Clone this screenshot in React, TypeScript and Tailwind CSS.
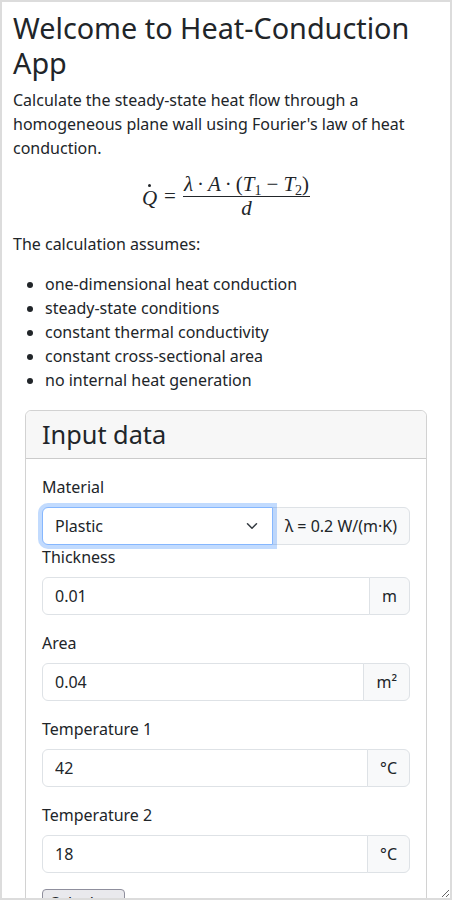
import React from "react";

const assumptions = [
  "one-dimensional heat conduction",
  "steady-state conditions",
  "constant thermal conductivity",
  "constant cross-sectional area",
  "no internal heat generation",
];

function Formula() {
  return (
    <div className="h-[72px] flex justify-center items-center font-['Liberation_Serif',serif] text-[21px] text-[#212529]">
      <span className="relative italic leading-[22px] top-[2px]">
        Q
        <span className="absolute left-[6px] top-[-3px] w-[3px] h-[3px] rounded-full bg-[#212529]" />
      </span>
      <span className="mx-[7px] leading-[22px]">=</span>
      <span className="inline-flex flex-col items-center">
        <span className="px-[1px] leading-[23px] whitespace-nowrap">
          <i>λ</i>
          <span className="mx-[4px]">·</span>
          <i>A</i>
          <span className="mx-[4px]">·</span>(<i>T</i>
          <sub className="text-[14px]">1</sub>
          <span className="mx-[5px]">−</span>
          <i>T</i>
          <sub className="text-[14px]">2</sub>)
        </span>
        <span className="w-full border-t border-[#212529] text-center leading-[21px] pt-[1px]">
          <i>d</i>
        </span>
      </span>
    </div>
  );
}

function UnitField({
  label,
  value,
  unit,
  last,
}: {
  label: string;
  value: string;
  unit: React.ReactNode;
  last?: boolean;
}) {
  return (
    <div className={last ? "" : "mb-4"}>
      <label className="block mb-2 leading-6">{label}</label>
      <div className="flex">
        <input
          className="flex-1 min-w-0 h-[38px] px-3 border border-[#dee2e6] rounded-l-[6px] text-base leading-6 text-[#212529] bg-white outline-none"
          value={value}
          readOnly
        />
        <span className="flex items-center px-3 -ml-px border border-[#dee2e6] rounded-r-[6px] bg-[#f8f9fa] leading-6">
          {unit}
        </span>
      </div>
    </div>
  );
}

export default function App() {
  return (
    <div className="w-[452px] h-[900px] overflow-hidden resize border-2 border-[#dcdcdc] bg-white px-[11px] pt-[9px] font-['Noto_Sans',sans-serif] text-[#212529] text-base leading-6">
      <h1 className="text-[28.8px] leading-[1.2] font-normal mb-2">
        Welcome to Heat-Conduction App
      </h1>
      <p>
        Calculate the steady-state heat flow through a homogeneous plane wall
        using Fourier's law of heat conduction.
      </p>

      <Formula />

      <p className="mb-4">The calculation assumes:</p>
      <ul className="list-disc pl-8 mb-[18px]">
        {assumptions.map((a) => (
          <li key={a}>{a}</li>
        ))}
      </ul>

      {/* Input card */}
      <div className="mx-3 border border-[rgba(0,0,0,0.175)] rounded-[6px]">
        <div className="px-4 py-2 bg-[#f7f7f7] border-b border-[rgba(0,0,0,0.175)] rounded-t-[6px]">
          <h2 className="text-[25.3px] leading-[31px] font-normal">Input data</h2>
        </div>
        <div className="p-4">
          <label className="block mb-2 leading-6">Material</label>
          <div className="flex">
            <div className="relative z-10 w-[231px] h-[38px] flex items-center justify-between pl-3 pr-[12px] border border-[#86b7fe] rounded-l-[6px] bg-white shadow-[0_0_0_4px_rgba(13,110,253,0.25)]">
              <span>Plastic</span>
              <svg width="16" height="12" viewBox="0 0 16 16" fill="none">
                <path
                  d="m2 5 6 6 6-6"
                  stroke="#343a40"
                  strokeWidth="2"
                  strokeLinecap="round"
                  strokeLinejoin="round"
                />
              </svg>
            </div>
            <span className="flex-1 flex items-center px-3 -ml-px border border-[#dee2e6] rounded-r-[6px] bg-[#f8f9fa] whitespace-nowrap">
              λ = 0.2 W/(m·K)
            </span>
          </div>
          <label className="block mb-2 leading-6">Thickness</label>
          <div className="flex mb-4">
            <input
              className="flex-1 min-w-0 h-[38px] px-3 border border-[#dee2e6] rounded-l-[6px] text-base text-[#212529] bg-white outline-none"
              value="0.01"
              readOnly
            />
            <span className="flex items-center px-3 -ml-px border border-[#dee2e6] rounded-r-[6px] bg-[#f8f9fa]">
              m
            </span>
          </div>
          <UnitField label="Area" value="0.04" unit="m²" />
          <UnitField label="Temperature 1" value="42" unit="°C" />
          <UnitField label="Temperature 2" value="18" unit="°C" last />
          <button className="mt-4 px-[6px] py-[1px] border border-[#8f8f9d] rounded-[4px] bg-[#e9e9ed] text-base leading-6">
            Calculate
          </button>
        </div>
      </div>
    </div>
  );
}
